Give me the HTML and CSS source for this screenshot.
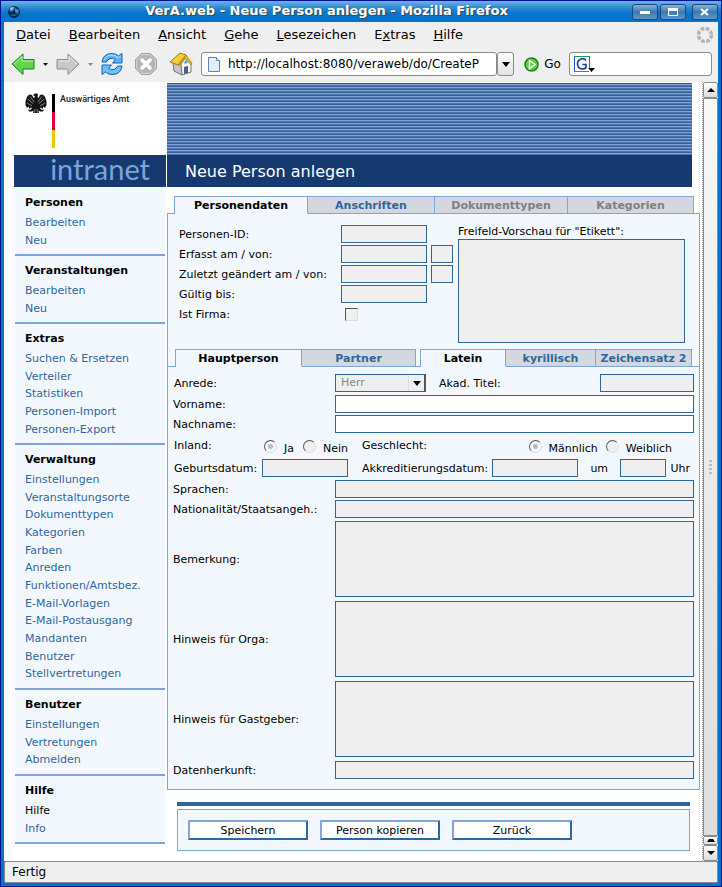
FILE: index.html
```html
<!DOCTYPE html>
<html lang="de">
<head>
<meta charset="utf-8">
<title>VerA.web - Neue Person anlegen</title>
<link rel="stylesheet" href="styles.css">
</head>
<body>
<div class="window">
  <header class="titlebar">
    <svg class="app-icon" width="14" height="14" viewBox="0 0 14 14"><circle cx="7" cy="7" r="6" fill="#082a52"/><path d="M2 5Q4 1 8 2L7 5L4 7ZM8 3L12 5L11 9L8 7Z" fill="#3b8fc0"/><path d="M3 3L6 2L5 5Z" fill="#b9e2f0"/><path d="M3 10Q7 13 11 9L8 9Z" fill="#1c5a92"/></svg>
    <span class="window-title">VerA.web - Neue Person anlegen - Mozilla Firefox</span>
    <button class="win-btn" aria-label="Minimieren"><svg width="12" height="10" viewBox="0 0 12 10"><path d="M1 4h10v3H1z" fill="#fff"/></svg></button>
    <button class="win-btn" aria-label="Maximieren"><svg width="12" height="10" viewBox="0 0 12 10"><path d="M1.5 1.500h9v7h-9z" fill="none" stroke="#fff"/><path d="M1 1h10v3H1z" fill="#fff"/></svg></button>
    <button class="win-btn win-close" aria-label="Schließen"><svg width="12" height="10" viewBox="0 0 12 10"><path d="M2 2l7 6M9 2l-7 6" stroke="#fff" stroke-width="2"/></svg></button>
  </header>
  <nav class="menubar">
    <a href="#"><u>D</u>atei</a><a href="#"><u>B</u>earbeiten</a><a href="#"><u>A</u>nsicht</a><a href="#"><u>G</u>ehe</a><a href="#"><u>L</u>esezeichen</a><a href="#">E<u>x</u>tras</a><a href="#"><u>H</u>ilfe</a>
    <svg class="throbber" width="18" height="18" viewBox="0 0 18 18"><circle cx="9" cy="9" r="6.500" fill="none" stroke="#b4b4b4" stroke-width="3.500" stroke-dasharray="3.600 1.500"/></svg>
  </nav>
  <div class="toolbar">
    <button class="tool" aria-label="Zurück"><svg width="24" height="24" viewBox="0 0 24 24"><path d="M1 12L12 2V7.500H23V17H12V22.500Z" fill="#63d34c" stroke="#17871a"/><path d="M3 12L11 4.500V9H22" fill="none" stroke="#b9f3a6"/></svg></button>
    <svg class="caret" width="5" height="3" viewBox="0 0 5 3"><path d="M0 0h5L2.500 3z" fill="#000"/></svg>
    <button class="tool tool-forward" aria-label="Vor"><svg width="24" height="24" viewBox="0 0 24 24"><path d="M23 12L12 2V7.500H1V17H12V22.500Z" fill="#c9c9c9" stroke="#8d8d8d"/><path d="M2.500 9H13V4.500L21 12" fill="none" stroke="#e8e8e8"/></svg></button>
    <svg class="caret" width="5" height="3" viewBox="0 0 5 3"><path d="M0 0h5L2.500 3z" fill="#888"/></svg>
    <button class="tool tool-reload" aria-label="Neu laden"><svg width="24" height="24" viewBox="0 0 24 24"><path d="M2 10Q3 1.500 12 1.500Q16 1.500 18.500 4L22 1.500V11H12.500L15.500 7.500Q9 4.500 6.500 10Z" fill="#5cb3f3" stroke="#1464b4"/><path d="M22 14Q21 22.500 12 22.500Q8 22.500 5.500 20L2 22.500V13H11.500L8.500 16.500Q15 19.500 17.500 14Z" fill="#6fc0f8" stroke="#1464b4"/><path d="M4 8Q6 3 12 3Q15 3 18 5.500L21 4" fill="none" stroke="#b9e2ff"/></svg></button>
    <button class="tool" aria-label="Stopp"><svg width="24" height="24" viewBox="0 0 24 24"><path d="M7.500 1.500h9l6 6v9l-6 6h-9l-6-6v-9z" fill="#b5b5b5" stroke="#a0a0a0"/><path d="M8 2.500h8l5.500 5.500v8l-5.500 5.500h-8l-5.500-5.500v-8z" fill="none" stroke="#d4d4d4"/><path d="M8 8l8 8M16 8l-8 8" stroke="#fff" stroke-width="3.500" stroke-linecap="round"/></svg></button>
    <button class="tool tool-home" aria-label="Startseite"><svg width="24" height="24" viewBox="0 0 24 24"><path d="M4 10L5 19L13 23V13Z" fill="#c4c6cc" stroke="#777"/><path d="M12 12L17 5L22 12V20L13 23Z" fill="#f4f4f6" stroke="#777"/><path d="M15 15l4-1v7l-4 1z" fill="#555a80"/><path d="M15.500 9l3-1v3l-3 1z" fill="#39b4e8"/><path d="M1 10L11 1L17 3L9 13Z" fill="#f5cf3a" stroke="#a87910"/><path d="M17 3L23 11L22 13L16 6L11 13L9 13Z" fill="#e9b820" stroke="#a87910" stroke-width=".700"/></svg></button>
    <label class="url"><svg width="12" height="15" viewBox="0 0 12 15"><path d="M.5.500h8l3 3v11h-11z" fill="#e2edff" stroke="#5b82c4"/><path d="M8.500.500v3h3" fill="#fff" stroke="#5b82c4"/></svg><input type="text" aria-label="Adresse" value="http://localhost:8080/veraweb/do/CreateP"></label>
    <button class="url-drop" aria-label="Verlauf"><svg width="8" height="5" viewBox="0 0 8 5"><path d="M0 0h8L4 5z"/></svg></button>
    <button class="go"><svg width="15" height="15" viewBox="0 0 15 15"><circle cx="7.500" cy="7.500" r="6.500" fill="#5ed23f" stroke="#168516" stroke-width="1.500"/><path d="M5.500 3.500L11 7.500L5.500 11.500Z" fill="#5ed23f" stroke="#fff" stroke-width="1.500"/></svg>Go</button>
    <label class="search"><svg width="21" height="17" viewBox="0 0 21 17"><path d="M.5 16V.500" stroke="#2554d8"/><path d="M0 .500h16" stroke="#24a044"/><path d="M15.500 1v12" stroke="#d42a2a"/><path d="M0 15.500h15" stroke="#24a044"/><path d="M12 4.500Q10 2 7 3Q3.500 4.500 3.500 8Q4 13 8.500 13Q11 13 12 11.500V8.500H8.500" fill="none" stroke="#2038a8" stroke-width="1.700"/><path d="M14 12h7l-3.500 4z"/></svg><input type="text" aria-label="Suche"></label>
  </div>
  <div class="viewport">
    <div class="page">
      <aside class="sidebar">
        <div class="brand">
          <svg class="eagle" width="22" height="21" viewBox="0 0 22 21"><path d="M8 2L10 .500H12.500L13 2L12.500 4L13.500 5L15 2L18 1.500L20 4L21.500 8L21.500 12L20 15L18.500 13.500L17.500 16L16 14.500L15 15.500L17 17L19 16.500L18 18.500L15 18.500L13.500 17.500L14 20H8L8.500 17.500L7 18.500L4 18.500L3 16.500L5 17L7 15.500L6 14.500L4.500 16L3.500 13.500L2 15L.5 12V8L2 4L4 1.500L7 2L8.500 5L10 4L9.500 3Z" fill="#151515"/><path d="M2.500 6L8 10.500M2 10L7 13M5 3.500L9 9M19.500 6L14 10.500M20 10L15 13M17 3.500L13 9M10 16L9.500 20M12 16L12.500 20" stroke="#fff" stroke-width=".450"/></svg>
          <div class="flag"><i class="black"></i><i class="red"></i><i class="gold"></i></div>
          <span class="office">Auswärtiges Amt</span>
        </div>
        <div class="intranet">intranet</div>
        <nav class="nav">
          <section><h2>Personen</h2><ul><li><a href="#">Bearbeiten</a></li><li><a href="#">Neu</a></li></ul></section>
          <section><h2>Veranstaltungen</h2><ul><li><a href="#">Bearbeiten</a></li><li><a href="#">Neu</a></li></ul></section>
          <section><h2>Extras</h2><ul><li><a href="#">Suchen &amp; Ersetzen</a></li><li><a href="#">Verteiler</a></li><li><a href="#">Statistiken</a></li><li><a href="#">Personen-Import</a></li><li><a href="#">Personen-Export</a></li></ul></section>
          <section><h2>Verwaltung</h2><ul><li><a href="#">Einstellungen</a></li><li><a href="#">Veranstaltungsorte</a></li><li><a href="#">Dokumenttypen</a></li><li><a href="#">Kategorien</a></li><li><a href="#">Farben</a></li><li><a href="#">Anreden</a></li><li><a href="#">Funktionen/Amtsbez.</a></li><li><a href="#">E-Mail-Vorlagen</a></li><li><a href="#">E-Mail-Postausgang</a></li><li><a href="#">Mandanten</a></li><li><a href="#">Benutzer</a></li><li><a href="#">Stellvertretungen</a></li></ul></section>
          <section><h2>Benutzer</h2><ul><li><a href="#">Einstellungen</a></li><li><a href="#">Vertretungen</a></li><li><a href="#">Abmelden</a></li></ul></section>
          <section><h2>Hilfe</h2><ul><li><a class="current" href="#">Hilfe</a></li><li><a href="#">Info</a></li></ul></section>
        </nav>
      </aside>
      <main class="main">
        <div class="banner"></div>
        <h1>Neue Person anlegen</h1>
        <form>
          <div class="tabs tabs-top">
            <a class="active" href="#">Personendaten</a><a href="#">Anschriften</a><a class="off">Dokumenttypen</a><a class="off">Kategorien</a>
          </div>
          <div class="panel">
            <div class="meta">
              <div class="meta-fields">
                <label for="pid">Personen-ID:</label><input id="pid" type="text" disabled>
                <label for="created">Erfasst am / von:</label><input id="created" type="text" disabled><input type="text" aria-label="Erfasst von" disabled>
                <label for="changed">Zuletzt geändert am / von:</label><input id="changed" type="text" disabled><input type="text" aria-label="Geändert von" disabled>
                <label for="valid">Gültig bis:</label><input id="valid" type="text" disabled>
                <label for="firm">Ist Firma:</label><input id="firm" type="checkbox" disabled>
              </div>
              <div class="preview">
                <label for="preview">Freifeld-Vorschau für "Etikett":</label>
                <textarea id="preview" disabled></textarea>
              </div>
            </div>
            <div class="subtabs">
              <div class="tabs tabs-person"><a class="active" href="#">Hauptperson</a><a href="#">Partner</a></div>
              <div class="tabs tabs-script"><a class="active" href="#">Latein</a><a href="#">kyrillisch</a><a href="#">Zeichensatz 2</a></div>
            </div>
            <div class="details">
              <div class="row row-title">
                <label class="name" for="salutation">Anrede:</label>
                <span class="select"><select id="salutation" disabled><option>Herr</option></select><svg width="8" height="5" viewBox="0 0 8 5"><path d="M0 0h8L4 5z"/></svg></span>
                <label class="akad" for="akad">Akad. Titel:</label><input class="title-input" id="akad" type="text" disabled>
              </div>
              <div class="row"><label class="name" for="first">Vorname:</label><input id="first" type="text"></div>
              <div class="row"><label class="name" for="last">Nachname:</label><input id="last" type="text"></div>
              <div class="row row-radios">
                <span class="inland">Inland:</span>
                <input id="ja" type="radio" name="inland" checked disabled><label class="opt opt-ja" for="ja">Ja</label>
                <input id="nein" type="radio" name="inland" disabled><label class="opt opt-nein" for="nein">Nein</label>
                <span class="gender">Geschlecht:</span>
                <input id="m" type="radio" name="gender" checked disabled><label class="opt opt-m" for="m">Männlich</label>
                <input id="w" type="radio" name="gender" disabled><label class="opt" for="w">Weiblich</label>
              </div>
              <div class="row row-dates">
                <label class="birth" for="birth">Geburtsdatum:</label><input class="date" id="birth" type="text" disabled>
                <label class="accr" for="accr">Akkreditierungsdatum:</label><input class="date" id="accr" type="text" disabled>
                <label class="at" for="time">um</label><input class="time" id="time" type="text" disabled><span class="clock">Uhr</span>
              </div>
              <div class="row"><label class="name" for="lang">Sprachen:</label><input id="lang" type="text" disabled></div>
              <div class="row"><label class="name" for="nat">Nationalität/Staatsangeh.:</label><input id="nat" type="text" disabled></div>
              <div class="row row-area"><label class="name" for="note">Bemerkung:</label><textarea id="note" disabled></textarea></div>
              <div class="row row-area"><label class="name" for="orga">Hinweis für Orga:</label><textarea id="orga" disabled></textarea></div>
              <div class="row row-area"><label class="name" for="host">Hinweis für Gastgeber:</label><textarea id="host" disabled></textarea></div>
              <div class="row"><label class="name" for="source">Datenherkunft:</label><input id="source" type="text" disabled></div>
            </div>
          </div>
          <div class="actions">
            <button type="button">Speichern</button><button type="button">Person kopieren</button><button type="button">Zurück</button>
          </div>
        </form>
      </main>
    </div>
    <div class="scrollbar">
      <div class="arrow"><svg width="8" height="4" viewBox="0 0 8 4"><path d="M0 4h8L4 0z"/></svg></div>
      <div class="thumb"><i></i><i></i><i></i><i></i></div>
      <div class="arrow arrow-mid"><svg width="8" height="3" viewBox="0 0 8 3"><path d="M0 3h8L6 0H2z"/></svg></div>
      <div class="arrow"><svg width="8" height="4" viewBox="0 0 8 4"><path d="M0 0h8L4 4z"/></svg></div>
    </div>
  </div>
  <footer class="status">Fertig</footer>
</div>
</body>
</html>
```
FILE: styles.css
```css
* { box-sizing: border-box; }

body {
  margin: 0;
  font: 11px/14px "DejaVu Sans", sans-serif;
  color: #000;
}

button, input, select, textarea {
  margin: 0;
  padding: 0;
  font: inherit;
  color: inherit;
}

svg { display: block; flex: none; }
a { text-decoration: none; color: #2f679c; }
h1, h2, ul { margin: 0; padding: 0; list-style: none; }

/* Window frame */
.window {
  display: flex;
  flex-direction: column;
  min-height: 100vh;
  padding: 0 3px 3px;
  background: #0774cb;
  border: solid #03138f;
  border-width: 0 1px 1px;
}

.titlebar {
  display: flex;
  align-items: center;
  gap: 2px;
  height: 22px;
  margin: 0 -3px;
  padding: 0 3px 0 6px;
  border-top: 1px solid #03138f;
  background: linear-gradient(#6db2e6, #1f82d2 40%, #0774cb 60%);
}

.window-title {
  flex: 1;
  padding-bottom: 2px;
  text-align: center;
  font-size: 13px;
  font-weight: bold;
  color: #fff;
  text-shadow: 1px 1px 1px #444;
}

.win-btn {
  display: grid;
  place-items: center;
  width: 26px;
  height: 16px;
  border: 1px solid #174a7c;
  border-radius: 3px;
  background: linear-gradient(#86b4da, #3d78ad 50%, #6298c8);
}

.win-close { margin-left: 4px; }

.menubar {
  display: flex;
  align-items: center;
  gap: 18px;
  height: 24px;
  padding: 2px 4px 0 12px;
  background: #efefef;
  font-size: 13px;
}

.menubar a { color: #000; }
.throbber { margin-left: auto; }

.toolbar {
  display: flex;
  align-items: center;
  height: 36px;
  padding: 0 6px 0 7px;
  background: #efefef;
  font-size: 12px;
}

.tool { border: 0; background: none; }
.caret { margin-left: 8px; }
.tool-forward { margin-left: 8px; }
.tool-reload { margin: 0 10px 0 7px; }
.tool-home { margin: 0 8px 0 11px; }

.url, .search {
  display: flex;
  align-items: center;
  height: 24px;
  border: 1px solid #8c8c8c;
  border-radius: 3px;
  background: #fff;
}

.url { flex: 294; gap: 8px; padding: 0 6px; }
.search { flex: 143; margin-left: 8px; padding-left: 4px; }

.url-drop {
  display: grid;
  place-items: center;
  width: 17px;
  height: 24px;
  border: 1px solid #8c8c8c;
  border-radius: 3px;
  background: linear-gradient(#fff, #e2e2e2);
}

.go {
  display: flex;
  align-items: center;
  gap: 5px;
  margin-left: 10px;
  border: 0;
  background: none;
}

.viewport { display: flex; flex: 1; background: #fff; }
.page { display: flex; flex: 1; align-items: flex-start; padding: 1px 2px 10px 10px; }

/* Sidebar */
.sidebar { width: 152px; margin-right: 1px; }

.brand {
  display: flex;
  align-items: flex-start;
  height: 72px;
  padding: 10px 0 0 11px;
}

.flag { width: 3px; margin: 1px 5px 0; }
.flag i { display: block; height: 18px; }
.black { background: #000; }
.red { background: #e4003a; }
.gold { background: #e5c800; }
.office { font: 500 9px/12px Roboto, sans-serif; color: #222; }

.intranet {
  height: 32px;
  padding-right: 16px;
  background: #163a70;
  color: #7ba3dc;
  text-align: right;
  font: 29px/28px Lato, sans-serif;
}

.nav { margin: 1px 1px 0; }

.nav section {
  padding: 5px 10px 6px;
  border-bottom: 2px solid #80a5dd;
  background: #f3f8ff;
}

.nav h2 { margin-bottom: 2px; font-size: 11px; line-height: 19px; }
.nav ul { margin-bottom: -1px; }
.nav li { line-height: 18px; white-space: nowrap; }
.nav li:nth-child(3n + 2) { line-height: 17px; }
.nav .current { color: #000; }

/* Main column */
.main { flex: 1; min-width: 0; }

.banner {
  height: 72px;
  margin-right: 8px;
  background: repeating-linear-gradient(#386093 0 1px, #80a4db 1px 2px, #4e76ac 2px 3px);
}

.main h1 {
  height: 32px;
  margin-right: 8px;
  padding-left: 18px;
  background: #163a70;
  color: #fff;
  font-size: 16px;
  font-weight: normal;
  line-height: 33px;
}

.tabs {
  display: grid;
  position: relative;
  margin-bottom: -1px;
  border-left: 1px solid #80a5dd;
}

.tabs a {
  height: 18px;
  border: solid #80a5dd;
  border-width: 1px 1px 1px 0;
  background: #d3d8df;
  text-align: center;
  font-weight: bold;
  line-height: 17px;
  white-space: nowrap;
}

.tabs .active { border-bottom-color: #f3f8ff; background: #f3f8ff; color: #000; }
.tabs .off { color: #808080; }
.tabs-top { grid-template-columns: 133fr 127fr 133fr 126fr; margin: 9px 6px -1px 7px; }

.panel {
  padding-bottom: 8px;
  border: 1px solid #80a5dd;
  background: #f3f8ff;
}

input[type="text"], textarea, select {
  height: 18px;
  border: 1px solid #2f679c;
  border-radius: 0;
  background: #fff;
}

.toolbar input[type="text"] {
  flex: 1;
  width: 0;
  border: 0;
  outline: 0;
  background: none;
}

.panel input:disabled, textarea:disabled, select:disabled { background: #efefef; }
textarea { display: block; resize: none; }
.panel label, .inland, .gender, .clock { padding-top: 2px; }

.meta {
  display: flex;
  gap: 5px;
  padding: 9px 14px 6px 11px;
}

.meta-fields {
  display: grid;
  grid-template-columns: 158px 86px 22px;
  grid-auto-rows: 18px;
  gap: 2px 4px;
  align-items: center;
  margin-top: 2px;
  white-space: nowrap;
}

.meta-fields label { grid-column: 1; }

input[type="checkbox"] {
  appearance: none;
  width: 13px;
  height: 13px;
  margin-left: 4px;
  border: 1px solid;
  border-color: #555 #ddd #ddd #555;
}

.preview { flex: 1; }
.preview label { display: block; height: 16px; }
.preview textarea { width: 100%; height: 104px; }

.subtabs {
  display: flex;
  gap: 4px;
  padding: 0 7px;
  border-bottom: 1px solid #80a5dd;
}

.tabs-person { flex: 241; grid-template-columns: 126fr 114fr; }
.tabs-script { flex: 272; grid-template-columns: 85fr 90fr 96fr; }

/* Detail rows */
.details { padding: 7px 5px 0; }
.row { display: flex; align-items: center; margin-bottom: 2px; white-space: nowrap; }
.name { width: 162px; }
.row > input[type="text"], .row textarea { flex: 1; min-width: 0; }
.row-title { margin-bottom: 3px; }
.row-title .name { padding-left: 1px; }

.select { display: grid; width: 91px; }
.select > * { grid-area: 1 / 1; }
.select select { appearance: none; padding-left: 5px; color: #888; opacity: 1; }

.select svg {
  box-sizing: content-box;
  justify-self: end;
  padding: 6px 3px 5px 4px;
  margin: 1px;
  border-right: 1px solid #555;
  border-left: 1px solid #ddd;
}

.akad { flex: 1; padding-left: 13px; }
.row > input.title-input { flex: none; width: 94px; }
.row-radios { height: 24px; margin: 0; padding: 0 22px 0 1px; }

input[type="radio"] {
  appearance: none;
  width: 13px;
  height: 13px;
  margin-bottom: 2px;
  border: 1px solid;
  border-color: #555 #ddd #ddd #555;
  border-radius: 50%;
}

input[type="radio"]:checked { background: radial-gradient(circle, #bbb 2px, transparent 3px); }
.inland { width: 90px; margin-bottom: 4px; }
.row .opt { padding: 4px 0 0 7px; }
.opt-ja { width: 26px; }
.opt-nein { width: 46px; }
.gender { flex: 1; margin-bottom: 4px; }
.opt-m { margin-right: 8px; }
.row-dates { margin-bottom: 3px; padding-left: 1px; }
.birth { width: 88px; }
.row > input.date { flex: none; width: 86px; }
.row > input.time { flex: none; width: 46px; }
.accr { width: 144px; padding-left: 14px; }
.at { flex: 1; text-align: center; }
.clock { padding-right: 4px; padding-left: 4px; }
.row-area { margin: 3px 0 4px; }
.row-area + .row-area { margin-top: 0; }
.row textarea { height: 76px; }

.actions {
  display: flex;
  gap: 12px;
  position: relative;
  margin: 19px 10px 0;
  padding: 10px;
  border: 1px solid #80a5dd;
  background: #f3f8ff;
}

.actions::before {
  content: "";
  position: absolute;
  inset: -8px -1px auto;
  height: 4px;
  background: #2f679c;
}

.actions button {
  width: 120px;
  height: 20px;
  padding-top: 2px;
  border: 2px solid;
  border-color: #80a5dd #2f679c #2f679c #80a5dd;
  background: #fff;
}

/* Window scrollbar and status */
.scrollbar {
  display: flex;
  flex-direction: column;
  width: 16px;
  border-left: 1px dotted #aaa;
}

.arrow {
  display: grid;
  place-items: center;
  height: 16px;
  border: 1px solid #8c8c8c;
  border-radius: 2px;
  background: linear-gradient(#fff, #ddd);
}

.arrow-mid { height: 9px; }

.thumb {
  display: flex;
  flex: 1;
  flex-direction: column;
  align-items: center;
  justify-content: center;
  gap: 2px;
  border: 1px solid #8c8c8c;
  background: linear-gradient(#f8f8f8, #ddd);
}

.thumb i { width: 3px; height: 2px; background: #bbb; }

.status {
  height: 22px;
  padding-left: 7px;
  border: 1px solid #8c8c8c;
  border-radius: 2px;
  background: #efefef;
  font-size: 12px;
  line-height: 20px;
}
```
